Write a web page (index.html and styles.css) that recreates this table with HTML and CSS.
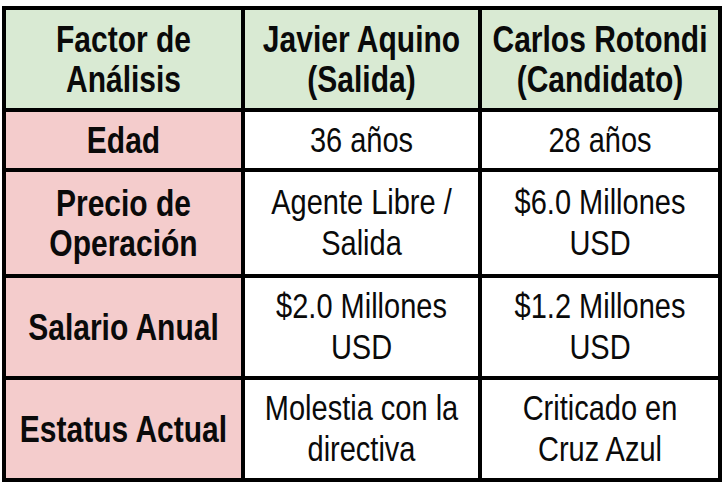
FILE: index.html
```html
<!DOCTYPE html>
<html lang="es">
<head>
<meta charset="utf-8">
<title>Comparativa</title>
<link rel="stylesheet" href="styles.css">
</head>
<body>
<table class="cmp">
  <colgroup>
    <col class="c1"><col class="c2"><col class="c3">
  </colgroup>
  <tr class="r-head">
    <th class="head"><span class="t">Factor de<br>Análisis</span></th>
    <th class="head"><span class="t">Javier Aquino<br>(Salida)</span></th>
    <th class="head"><span class="t">Carlos Rotondi<br>(Candidato)</span></th>
  </tr>
  <tr class="r-short">
    <th class="factor"><span class="t">Edad</span></th>
    <td><span class="t">36 años</span></td>
    <td><span class="t">28 años</span></td>
  </tr>
  <tr class="r-tall">
    <th class="factor"><span class="t">Precio de<br>Operación</span></th>
    <td><span class="t">Agente Libre /<br>Salida</span></td>
    <td><span class="t">$6.0 Millones<br>USD</span></td>
  </tr>
  <tr class="r-mid">
    <th class="factor"><span class="t">Salario Anual</span></th>
    <td><span class="t">$2.0 Millones<br>USD</span></td>
    <td><span class="t">$1.2 Millones<br>USD</span></td>
  </tr>
  <tr class="r-mid">
    <th class="factor"><span class="t">Estatus Actual</span></th>
    <td><span class="t">Molestia con la<br>directiva</span></td>
    <td><span class="t">Criticado en<br>Cruz Azul</span></td>
  </tr>
</table>
</body>
</html>
```
FILE: styles.css
```css
html, body {
  margin: 0;
  padding: 0;
  background: #ffffff;
}
body {
  padding: 6px 0 0 2px;
  font-family: "Liberation Sans", Arial, sans-serif;
  color: #0a0a0a;
}
.cmp {
  table-layout: fixed;
  width: 720px;
  border-collapse: separate;
  border-spacing: 4px;
  background: #000000;
}
.c1 { width: 235px; }
.c2 { width: 233px; }
.c3 { width: 236px; }
.cmp th, .cmp td {
  padding: 0;
  text-align: center;
  vertical-align: middle;
  background: #ffffff;
  font-size: 29px;
  font-weight: normal;
  line-height: 33px;
}
.cmp th.head {
  background: #d9ead3;
  font-weight: bold;
  font-size: 30px;
}
.cmp th.factor {
  background: #f4cccc;
  font-weight: bold;
  font-size: 30px;
}
.r-head { height: 98px; }
.r-short { height: 56px; }
.r-tall { height: 102px; }
.r-mid { height: 98px; }
.t {
  display: inline-block;
  transform: scaleY(1.22);
  transform-origin: center;
  white-space: nowrap;
}
```
